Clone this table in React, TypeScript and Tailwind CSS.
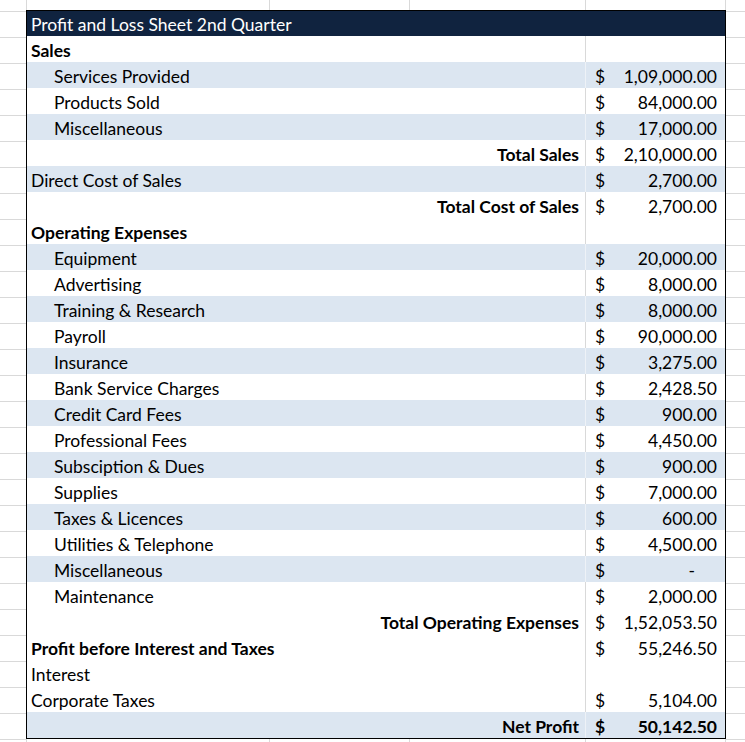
import clsx from "clsx";

interface Row {
  label: string;
  amount?: string;
  kind?: "heading" | "item" | "plain" | "total";
  band?: boolean;
  strong?: boolean;
}

const rows: Row[] = [
  { label: "Sales", kind: "heading" },
  { label: "Services Provided", amount: "1,09,000.00", kind: "item", band: true },
  { label: "Products Sold", amount: "84,000.00", kind: "item" },
  { label: "Miscellaneous", amount: "17,000.00", kind: "item", band: true },
  { label: "Total Sales", amount: "2,10,000.00", kind: "total" },
  { label: "Direct Cost of Sales", amount: "2,700.00", kind: "plain", band: true },
  { label: "Total Cost of Sales", amount: "2,700.00", kind: "total" },
  { label: "Operating Expenses", kind: "heading" },
  { label: "Equipment", amount: "20,000.00", kind: "item", band: true },
  { label: "Advertising", amount: "8,000.00", kind: "item" },
  { label: "Training & Research", amount: "8,000.00", kind: "item", band: true },
  { label: "Payroll", amount: "90,000.00", kind: "item" },
  { label: "Insurance", amount: "3,275.00", kind: "item", band: true },
  { label: "Bank Service Charges", amount: "2,428.50", kind: "item" },
  { label: "Credit Card Fees", amount: "900.00", kind: "item", band: true },
  { label: "Professional Fees", amount: "4,450.00", kind: "item" },
  { label: "Subsciption & Dues", amount: "900.00", kind: "item", band: true },
  { label: "Supplies", amount: "7,000.00", kind: "item" },
  { label: "Taxes & Licences", amount: "600.00", kind: "item", band: true },
  { label: "Utilities & Telephone", amount: "4,500.00", kind: "item" },
  { label: "Miscellaneous", amount: "-", kind: "item", band: true },
  { label: "Maintenance", amount: "2,000.00", kind: "item" },
  { label: "Total Operating Expenses", amount: "1,52,053.50", kind: "total" },
  { label: "Profit before Interest and Taxes", amount: "55,246.50", kind: "heading" },
  { label: "Interest", kind: "plain" },
  { label: "Corporate Taxes", amount: "5,104.00", kind: "plain" },
  { label: "Net Profit", amount: "50,142.50", kind: "total", band: true, strong: true },
];

// gridline strip above/below the sheet
function GridStrip({ height }: { height: string }) {
  return (
    <div className={clsx("flex border-l border-[#d9d9d9]", height)}>
      <div className="w-[243px] border-r border-[#d9d9d9]" />
      <div className="w-[140px] border-r border-[#d9d9d9]" />
      <div className="w-[176px] border-r border-[#d9d9d9]" />
      <div className="w-[140px] border-r border-[#d9d9d9]" />
    </div>
  );
}

function Gutter({ width }: { width: string }) {
  return (
    <div className={clsx("flex flex-col", width)}>
      <div className="h-[12px] border-b border-[#d9d9d9]" />
      {Array.from({ length: 28 }).map((_, i) => (
        <div key={i} className="h-[26px] border-b border-[#d9d9d9]" />
      ))}
    </div>
  );
}

export default function App() {
  return (
    <div
      className="flex h-[742px] w-[745px] overflow-hidden bg-white text-[17.5px] text-black"
      style={{ fontFamily: "Lato, 'Open Sans', sans-serif" }}
    >
      <Gutter width="w-[26px]" />

      <div className="flex w-[700px] flex-col">
        <GridStrip height="h-[11px]" />

        <div className="border border-black">
          {/* Title */}
          <div className="flex h-[25px] items-end whitespace-nowrap bg-[#10233f] pb-[1px] pl-[4px] leading-[20px] text-white">
            Profit and Loss Sheet 2nd Quarter
          </div>

          {rows.map((row, i) => (
            <div
              key={i}
              className={clsx("flex h-[26px]", row.band ? "bg-[#dce6f1]" : "bg-white")}
            >
              <div
                className={clsx(
                  "flex w-[558px] items-end whitespace-nowrap pb-[1px] leading-[20px]",
                  row.kind === "item" && "pl-[27px]",
                  (row.kind === "plain" || row.kind === "heading") && "pl-[4px]",
                  row.kind === "heading" && "font-bold",
                  row.kind === "total" && "justify-end pr-[6px] font-bold"
                )}
              >
                {row.label}
              </div>
              <div className={clsx("w-px", row.band ? "bg-[#eef2f7]" : "bg-[#d9d9d9]")} />
              <div
                className={clsx(
                  "flex flex-1 items-end justify-between whitespace-nowrap pb-[1px] pl-[9px] leading-[20px]",
                  row.amount === "-" ? "pr-[30px]" : "pr-[8px]",
                  row.strong && "font-bold"
                )}
              >
                {row.amount && (
                  <>
                    <span>$</span>
                    <span>{row.amount}</span>
                  </>
                )}
              </div>
            </div>
          ))}
        </div>

        <GridStrip height="h-[3px]" />
      </div>

      <Gutter width="flex-1" />
    </div>
  );
}
